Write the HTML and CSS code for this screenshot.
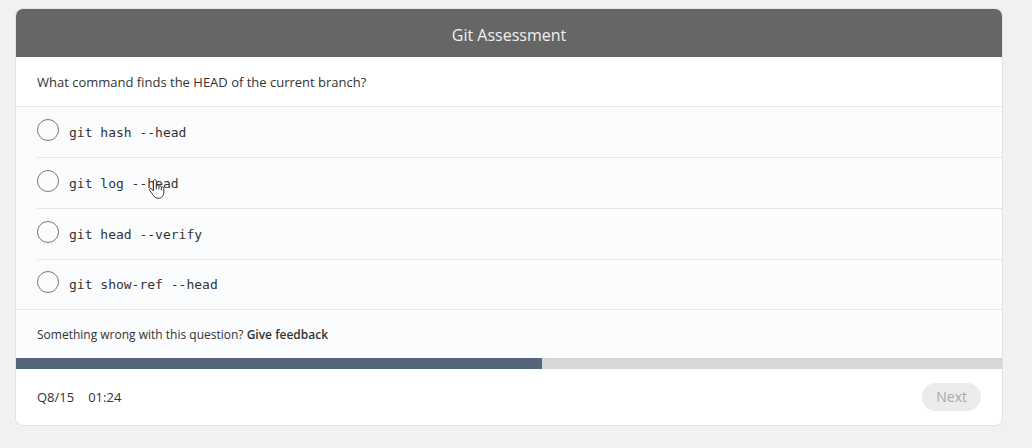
FILE: index.html
```html
<!DOCTYPE html>
<html lang="en">
<head>
<meta charset="utf-8">
<meta name="viewport" content="width=device-width, initial-scale=1">
<title>Git Assessment</title>
<link rel="stylesheet" href="styles.css">
</head>
<body>
<main class="card">
  <header class="card-header"><h1 class="title">Git Assessment</h1></header>
  <form class="quiz">
    <h2 class="question" id="question">What command finds the HEAD of the current branch?</h2>
    <div class="answers" role="radiogroup" aria-labelledby="question">
      <div class="answer"><input class="radio" type="radio" name="answer" id="a1"><label class="code" for="a1">git hash --head</label></div>
      <div class="answer"><input class="radio" type="radio" name="answer" id="a2"><label class="code" for="a2">git log --head</label>
        <svg class="pointer" width="18" height="22" viewBox="0 0 18 22" aria-hidden="true"><path d="M5.5 13V3.2C5.5 1 8.3 1 8.3 3.2V8.2C8.3 6.8 10.8 6.8 10.9 8.6C11.1 7.5 13.3 7.7 13.4 9.3C13.7 8.4 15.8 8.7 15.8 10.4V14C15.8 18 13.6 20.3 10.5 20.3C7.4 20.3 6 18.7 4.6 16.2L1.6 12.3C0.8 10.7 2.7 9.8 3.8 11Z"/><path d="M8.3 8V11.5M10.9 8.8V11.5M13.4 9.5V12"/></svg>
      </div>
      <div class="answer"><input class="radio" type="radio" name="answer" id="a3"><label class="code" for="a3">git head --verify</label></div>
      <div class="answer"><input class="radio" type="radio" name="answer" id="a4"><label class="code" for="a4">git show-ref --head</label></div>
    </div>
    <p class="feedback">Something wrong with this question? <a class="feedback-link" href="#feedback">Give feedback</a></p>
    <div class="progress" role="progressbar" aria-label="Progress" aria-valuemin="0" aria-valuemax="15" aria-valuenow="8"><div class="progress-fill" style="width: calc(100% * 8 / 15)"></div></div>
    <footer class="card-footer">
      <span>Q8/15</span>
      <span>01:24</span>
      <button class="next" type="submit" disabled>Next</button>
    </footer>
  </form>
</main>
</body>
</html>
```
FILE: styles.css
```css
* { box-sizing: border-box; }

body {
  margin: 0;
  padding: 9px 30px 22px 16px;
  background: #f2f1ef;
  color: #333;
  font-family: "Segoe UI", "Open Sans", "Noto Sans", sans-serif;
  font-size: 13px;
}

.card {
  overflow: hidden;
  background: #fff;
  border-radius: 7px;
  box-shadow: 0 0 0 1px #e4e3e2;
}

.card-header {
  padding: 14px 20px 10px;
  background: #666;
  text-align: center;
}

.title {
  margin: 0;
  color: #f0f0f0;
  font-size: 16px;
  font-weight: 400;
  line-height: 24px;
}

.question {
  margin: 0;
  padding: 13px 21px 12px;
  font-size: 13px;
  font-weight: 400;
  line-height: 24px;
}

.answers {
  padding-left: 21px;
  background: #fafcfe;
  border-top: 1px solid #e8e9ea;
  border-bottom: 1px solid #e4e6e8;
}

.answer {
  position: relative;
  display: flex;
  align-items: flex-start;
  gap: 10px;
  min-height: 51px;
  padding-top: 12px;
  border-bottom: 1px solid #e3e5e7;
}

.answer:last-child {
  min-height: 49px;
  padding-top: 11px;
  border-bottom: 0;
}

.radio {
  appearance: none;
  width: 22px;
  height: 22px;
  margin: 0;
  border: 1px solid #777;
  border-radius: 50%;
  background: #fcfcfe;
}

.radio:checked { box-shadow: inset 0 0 0 5px #56667a; }

.code {
  padding-top: 4px;
  font-family: Consolas, "DejaVu Sans Mono", "Liberation Mono", monospace;
  font-size: 13px;
  line-height: 20px;
}

.pointer {
  position: absolute;
  top: 20px;
  left: 111px;
  fill: #fff;
  stroke: #333;
  stroke-width: 1;
  stroke-linejoin: round;
}

.feedback {
  margin: 0;
  padding: 15px 21px 13px;
  background: #fafcfe;
  font-size: 12px;
  line-height: 20px;
}

.feedback-link {
  color: #333;
  font-weight: 600;
  text-decoration: none;
}

.progress {
  height: 11px;
  background: #d7d7d7;
}

.progress-fill {
  height: 100%;
  background: #56667a;
}

.card-footer {
  display: flex;
  align-items: center;
  gap: 14px;
  padding: 14px 21px;
}

.next {
  margin-left: auto;
  padding: 0 14px;
  border: 0;
  border-radius: 14px;
  background: #ebebeb;
  color: #aaa;
  font: inherit;
  font-size: 14px;
  line-height: 28px;
}
```
